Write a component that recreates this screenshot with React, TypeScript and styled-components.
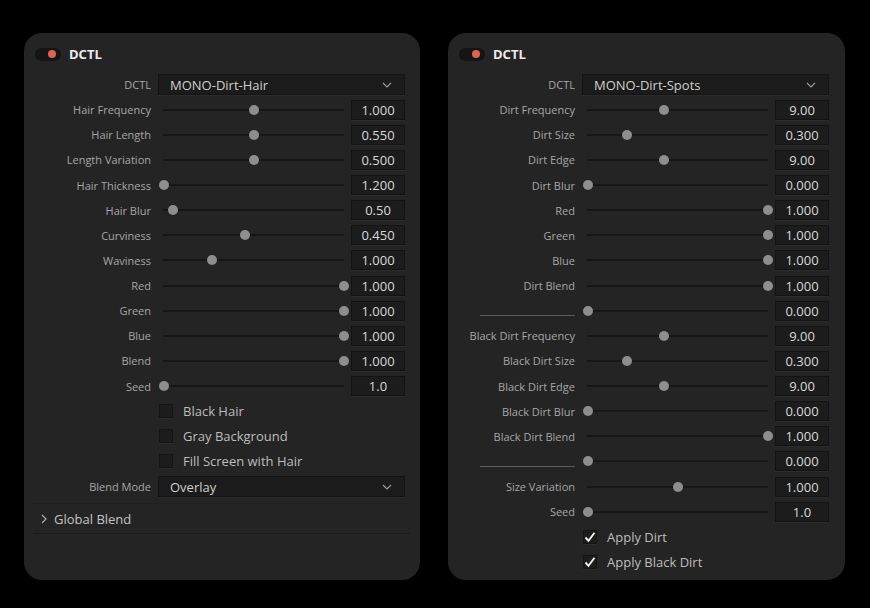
import React from "react";
import styled, { createGlobalStyle } from "styled-components";

const Global = createGlobalStyle`
  html, body { margin: 0; padding: 0; background: #000; }
  body { font-family: "Open Sans", "Noto Sans", sans-serif; -webkit-font-smoothing: antialiased; }
`;

const Page = styled.div`
  display: flex;
  gap: 28px;
  padding: 33px 0 0 24px;
  width: 870px;
  height: 608px;
  box-sizing: border-box;
  background: #000;
`;

const Panel = styled.div<{ $w: number }>`
  width: ${(p) => p.$w}px;
  height: 547px;
  box-sizing: border-box;
  background: #242424;
  border-radius: 18px;
  display: flex;
  flex-direction: column;
  padding-top: 12px;
`;

const Header = styled.div`
  display: flex;
  align-items: center;
  gap: 8px;
  height: 18px;
  padding-left: 11px;
`;

const Toggle = styled.div`
  width: 26px;
  height: 13px;
  border-radius: 7px;
  background: #151515;
  display: flex;
  align-items: center;
  justify-content: flex-end;
  padding-right: 5px;
  box-sizing: border-box;
`;

const Dot = styled.div`
  width: 8px;
  height: 8px;
  border-radius: 50%;
  background: #dc634f;
`;

const Title = styled.div`
  color: #ececec;
  font-weight: 700;
  font-size: 13px;
`;

const Rows = styled.div`
  margin-top: 9px;
  display: flex;
  flex-direction: column;
`;

const Row = styled.div`
  display: grid;
  grid-template-columns: 127px 247px;
  column-gap: 7px;
  height: 25.13px;
  align-items: center;
`;

const Label = styled.div`
  text-align: right;
  font-size: 11px;
  color: #a6a6a6;
  white-space: nowrap;
`;

const LabelLine = styled.div`
  justify-self: end;
  width: 95px;
  height: 1px;
  background: #5c5c5c;
  margin-top: 10px;
`;

const Dropdown = styled.div`
  height: 21px;
  box-sizing: border-box;
  background: #1b1b1b;
  border: 1px solid #141414;
  box-shadow: 0 1px 0 #2b2b2b;
  display: flex;
  align-items: center;
  justify-content: space-between;
  padding: 0 12px 0 11px;
  color: #cfcfcf;
  font-size: 13px;
`;

const SliderWrap = styled.div`
  display: grid;
  grid-template-columns: 191px 54px;
  column-gap: 2px;
  align-items: center;
`;

const SliderArea = styled.div`
  padding: 0 5px 0 6px;
  height: 20px;
  display: flex;
  align-items: center;
`;

const Track = styled.div`
  position: relative;
  flex: 1;
  height: 2px;
  background: #161616;
  margin-left: -1px;
`;

const Thumb = styled.div`
  position: absolute;
  top: 50%;
  width: 10px;
  height: 10px;
  margin: -5px 0 0 -5px;
  border-radius: 50%;
  background: #8e8e8e;
`;

const ValueBox = styled.div`
  height: 20px;
  box-sizing: border-box;
  background: #1c1c1c;
  border: 1px solid #131313;
  box-shadow: 0 1px 0 #2c2c2c;
  color: #d9d9d9;
  font-size: 13px;
  display: flex;
  align-items: center;
  justify-content: center;
`;

const CheckRow = styled.div`
  display: flex;
  align-items: center;
  gap: 10px;
  padding-left: 1px;
  color: #bdbdbd;
  font-size: 13px;
`;

const Box = styled.div`
  width: 14px;
  height: 14px;
  box-sizing: border-box;
  background: #1c1c1c;
  border: 1px solid #151515;
  box-shadow: 0 1px 0 #2c2c2c;
  display: flex;
  align-items: center;
  justify-content: center;
`;

const Section = styled.div`
  margin: 4px 10px 0 9px;
  height: 31px;
  box-sizing: border-box;
  border-top: 1px solid #202020;
  border-bottom: 1px solid #1b1b1b;
  display: flex;
  align-items: center;
  gap: 7px;
  padding-left: 8px;
  color: #c3c3c3;
  font-size: 13px;
`;

const Chevron = () => (
  <svg width="10" height="6" viewBox="0 0 10 6">
    <polyline points="1,1 5,5 9,1" fill="none" stroke="#9a9a9a" strokeWidth="1.2" />
  </svg>
);

const RightChevron = () => (
  <svg width="6" height="10" viewBox="0 0 6 10">
    <polyline points="1,1 5,5 1,9" fill="none" stroke="#a8a8a8" strokeWidth="1.2" />
  </svg>
);

const Check = () => (
  <svg width="12" height="12" viewBox="0 0 12 12">
    <polyline points="1.5,6.5 4.5,9.8 10.5,1.8" fill="none" stroke="#f2f2f2" strokeWidth="1.9" />
  </svg>
);

type Item =
  | { kind: "dropdown"; label: string; value: string }
  | { kind: "slider"; label: string | null; frac: number; value: string }
  | { kind: "check"; label: string; checked: boolean };

const left: Item[] = [
  { kind: "dropdown", label: "DCTL", value: "MONO-Dirt-Hair" },
  { kind: "slider", label: "Hair Frequency", frac: 0.5, value: "1.000" },
  { kind: "slider", label: "Hair Length", frac: 0.5, value: "0.550" },
  { kind: "slider", label: "Length Variation", frac: 0.5, value: "0.500" },
  { kind: "slider", label: "Hair Thickness", frac: 0, value: "1.200" },
  { kind: "slider", label: "Hair Blur", frac: 0.05, value: "0.50" },
  { kind: "slider", label: "Curviness", frac: 0.45, value: "0.450" },
  { kind: "slider", label: "Waviness", frac: 0.267, value: "1.000" },
  { kind: "slider", label: "Red", frac: 1, value: "1.000" },
  { kind: "slider", label: "Green", frac: 1, value: "1.000" },
  { kind: "slider", label: "Blue", frac: 1, value: "1.000" },
  { kind: "slider", label: "Blend", frac: 1, value: "1.000" },
  { kind: "slider", label: "Seed", frac: 0, value: "1.0" },
  { kind: "check", label: "Black Hair", checked: false },
  { kind: "check", label: "Gray Background", checked: false },
  { kind: "check", label: "Fill Screen with Hair", checked: false },
  { kind: "dropdown", label: "Blend Mode", value: "Overlay" },
];

const right: Item[] = [
  { kind: "dropdown", label: "DCTL", value: "MONO-Dirt-Spots" },
  { kind: "slider", label: "Dirt Frequency", frac: 0.42, value: "9.00" },
  { kind: "slider", label: "Dirt Size", frac: 0.217, value: "0.300" },
  { kind: "slider", label: "Dirt Edge", frac: 0.42, value: "9.00" },
  { kind: "slider", label: "Dirt Blur", frac: 0, value: "0.000" },
  { kind: "slider", label: "Red", frac: 1, value: "1.000" },
  { kind: "slider", label: "Green", frac: 1, value: "1.000" },
  { kind: "slider", label: "Blue", frac: 1, value: "1.000" },
  { kind: "slider", label: "Dirt Blend", frac: 1, value: "1.000" },
  { kind: "slider", label: null, frac: 0, value: "0.000" },
  { kind: "slider", label: "Black Dirt Frequency", frac: 0.42, value: "9.00" },
  { kind: "slider", label: "Black Dirt Size", frac: 0.217, value: "0.300" },
  { kind: "slider", label: "Black Dirt Edge", frac: 0.42, value: "9.00" },
  { kind: "slider", label: "Black Dirt Blur", frac: 0, value: "0.000" },
  { kind: "slider", label: "Black Dirt Blend", frac: 1, value: "1.000" },
  { kind: "slider", label: null, frac: 0, value: "0.000" },
  { kind: "slider", label: "Size Variation", frac: 0.5, value: "1.000" },
  { kind: "slider", label: "Seed", frac: 0, value: "1.0" },
  { kind: "check", label: "Apply Dirt", checked: true },
  { kind: "check", label: "Apply Black Dirt", checked: true },
];

const RowView = ({ item }: { item: Item }) => {
  if (item.kind === "dropdown") {
    return (
      <Row>
        <Label>{item.label}</Label>
        <Dropdown>
          <span>{item.value}</span>
          <Chevron />
        </Dropdown>
      </Row>
    );
  }
  if (item.kind === "check") {
    return (
      <Row>
        <span />
        <CheckRow>
          <Box>{item.checked && <Check />}</Box>
          <span>{item.label}</span>
        </CheckRow>
      </Row>
    );
  }
  return (
    <Row>
      {item.label ? <Label>{item.label}</Label> : <LabelLine />}
      <SliderWrap>
        <SliderArea>
          <Track>
            <Thumb style={{ left: `calc(${item.frac * 100}% + ${1 - item.frac}px)` }} />
          </Track>
        </SliderArea>
        <ValueBox>{item.value}</ValueBox>
      </SliderWrap>
    </Row>
  );
};

const PanelView = ({ items, width, footer }: { items: Item[]; width: number; footer?: boolean }) => (
  <Panel $w={width}>
    <Header>
      <Toggle>
        <Dot />
      </Toggle>
      <Title>DCTL</Title>
    </Header>
    <Rows>
      {items.map((it, i) => (
        <RowView key={i} item={it} />
      ))}
    </Rows>
    {footer && (
      <Section>
        <RightChevron />
        <span>Global Blend</span>
      </Section>
    )}
  </Panel>
);

export default function App() {
  return (
    <>
      <Global />
      <Page>
        <PanelView items={left} width={396} footer />
        <PanelView items={right} width={397} />
      </Page>
    </>
  );
}
